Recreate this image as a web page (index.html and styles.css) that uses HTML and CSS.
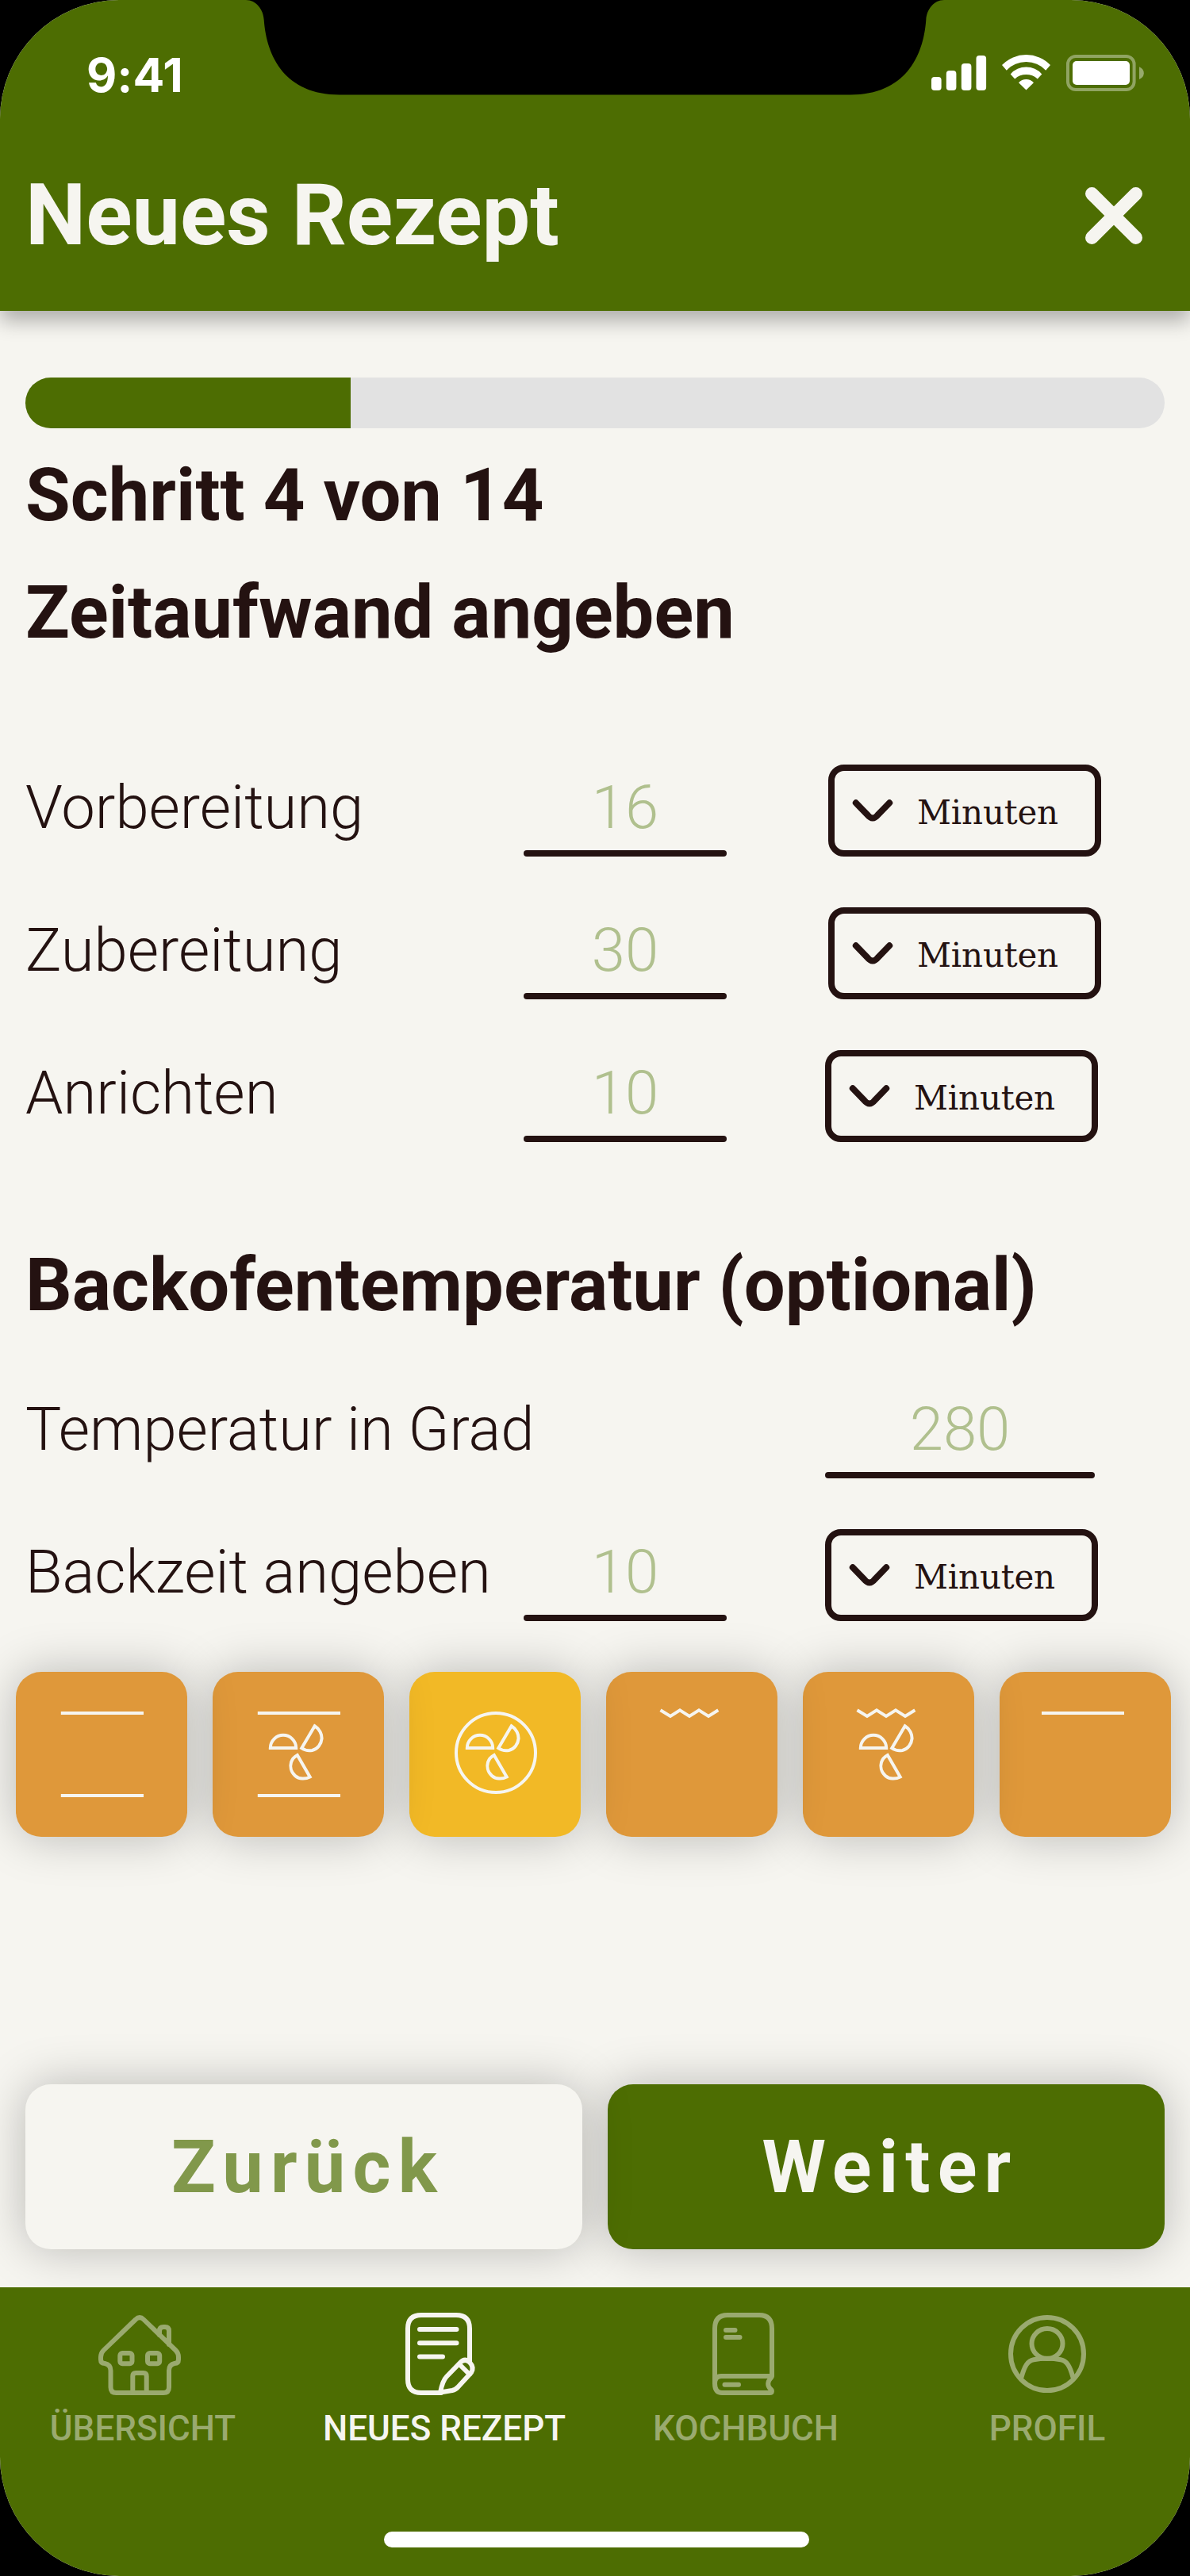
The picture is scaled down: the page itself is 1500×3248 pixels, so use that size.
FILE: index.html
```html
<!DOCTYPE html>
<html lang="de">
<head>
<meta charset="utf-8">
<title>Neues Rezept</title>
<link rel="stylesheet" href="styles.css">
</head>
<body>
<svg class="defs" width="0" height="0">
  <symbol id="chevron" viewBox="0 0 52 32">
    <path d="M4.8 6.3 19.5 21.5Q26 29.5 32.5 21.5L47.2 6.3" fill="none" stroke="currentColor" stroke-width="8" stroke-linecap="round"/>
  </symbol>
  <symbol id="fan" viewBox="0 0 216 208">
    <path d="M72.8 96A16.2 16.2 0 0 1 105.2 96ZM112.2 96.2 128.700 68.2C135 72 137.800 79 137.600 84 137 91 132.500 97.500 125.500 99 120 100 115.500 98.500 112.2 96.2ZM106.800 105 122.700 132.500C117 135.500 109 135.500 104 131 98.500 126 97.500 119 99 114 100.500 109.500 103 107 106.800 105Z"/>
  </symbol>
  <symbol id="zigzag" viewBox="0 0 216 208">
    <path d="M68.5 48.2 81 56 93 48.4 105 56 117 48.4 129 56 141.3 48.2"/>
  </symbol>
</svg>
<div class="phone">
  <header class="header">
    <div class="status">
      <span class="time">9:41</span>
      <svg class="status-icons" viewBox="1174 69 268 46" fill="#fff">
        <rect x="1174" y="97" width="12.6" height="17" rx="4"/>
        <rect x="1192.8" y="89" width="12.6" height="25" rx="4"/>
        <rect x="1211.8" y="80" width="12.6" height="34" rx="4"/>
        <rect x="1230.5" y="70" width="12.6" height="44" rx="4"/>
        <path d="M1263 82A42.5 42.5 0 0 1 1324 82L1318.2 88.7A34 34 0 0 0 1268.8 88.7Z"/>
        <path d="M1273.7 93.4A26.5 26.5 0 0 1 1313.3 93.4L1307.8 99.5A21 21 0 0 0 1279.2 99.5Z"/>
        <path d="M1284 104.3A12.5 12.5 0 0 1 1303 104.3L1293.5 113.6Z"/>
        <rect x="1346" y="71" width="83.6" height="42" rx="10" fill="none" stroke="#fff" stroke-opacity=".38" stroke-width="4"/>
        <rect x="1352" y="77" width="72" height="30" rx="5"/>
        <path d="M1436 84.3Q1441.8 87 1441.8 92.2T1436 100Z" fill-opacity=".42"/>
      </svg>
    </div>
    <div class="title-bar">
      <h1 class="title">Neues Rezept</h1>
      <svg class="close" viewBox="0 0 72 72"><path d="M8.3 8.3 63.7 63.7M63.7 8.3 8.3 63.7"/></svg>
    </div>
    <svg class="notch" viewBox="0 0 880 120"><path d="M0 0C13 0 22 12 22.7 25 26 72 50 119.5 118 119.5H762C830 119.5 854 72 857.3 25 858 12 867 0 880 0Z"/></svg>
  </header>

  <main class="main">
    <div class="progress"><div class="progress-fill" style="width:28.57%"></div></div>
    <h2 class="heading step">Schritt 4 von 14</h2>
    <h2 class="heading topic">Zeitaufwand angeben</h2>

    <div class="rows times">
      <div class="row"><span class="label">Vorbereitung</span><span class="value">16</span><span class="select"><svg><use href="#chevron"/></svg><span>Minuten</span></span></div>
      <div class="row"><span class="label">Zubereitung</span><span class="value">30</span><span class="select"><svg><use href="#chevron"/></svg><span>Minuten</span></span></div>
      <div class="row"><span class="label">Anrichten</span><span class="value">10</span><span class="select select-near"><svg><use href="#chevron"/></svg><span>Minuten</span></span></div>
    </div>

    <h2 class="heading oven">Backofentemperatur (optional)</h2>
    <div class="rows oven-rows">
      <div class="row"><span class="label label-wide">Temperatur in Grad</span><span class="value value-wide">280</span></div>
      <div class="row"><span class="label">Backzeit angeben</span><span class="value">10</span><span class="select select-near"><svg><use href="#chevron"/></svg><span>Minuten</span></span></div>
    </div>

    <div class="modes">
      <div class="mode"><svg viewBox="0 0 216 208"><path d="M56.8 52H161M56.8 156H161"/></svg></div>
      <div class="mode"><svg viewBox="0 0 216 208"><path d="M56.8 52H161M56.8 156H161"/><use href="#fan"/></svg></div>
      <div class="mode mode-active"><svg viewBox="0 0 216 208"><circle cx="109" cy="102" r="50"/><use href="#fan"/></svg></div>
      <div class="mode"><svg viewBox="0 0 216 208"><use href="#zigzag"/></svg></div>
      <div class="mode"><svg viewBox="0 0 216 208"><use href="#zigzag"/><use href="#fan"/></svg></div>
      <div class="mode"><svg viewBox="0 0 216 208"><path d="M53 52H157"/></svg></div>
    </div>

    <div class="actions">
      <div class="button back">Zurück</div>
      <div class="button next">Weiter</div>
    </div>
  </main>

  <nav class="nav">
    <div class="tab">
      <svg viewBox="120 2912 120 112">
        <path d="M171 2924.500Q176 2919.500 181 2924.500L221.500 2963.500Q225 2967 225 2972V2975Q225 2980 220 2980 213 2981.500 213 2989V3010Q213 3017 206 3017H146.500Q139.500 3017 139.500 3010V2989Q139.500 2981.500 132 2980 127 2980 127 2975V2972Q127 2967 130.500 2963.500Z"/>
        <path d="M201 2944V2939Q201 2934 206 2934H208Q213 2934 213 2939V2956"/>
        <rect x="151.300" y="2967" width="15.200" height="13.300" rx="3"/>
        <rect x="186" y="2967" width="15.200" height="13.300" rx="3"/>
        <path d="M167.300 3017V2996Q167.300 2992 171.300 2992H180.700Q184.700 2992 184.700 2996V3017"/>
      </svg>
      <span>ÜBERSICHT</span>
    </div>
    <div class="tab tab-active">
      <svg viewBox="500 2912 120 112">
        <path d="M556 3017H531Q514 3017 514 3000V2936Q514 2919 531 2919H575Q592 2919 592 2936V2977"/>
        <path d="M529 2937H575.500M529 2954.200H575.500M529 2971.500H558"/>
        <path d="M555 3016.500C557 3006 559 3000.500 563 2996.500L580.500 2978.500Q586 2973 592 2978.500 598 2985 594 2991.500L577.500 3009.500Q574.500 3013 570 3014ZM579 2981 592 2994"/>
      </svg>
      <span>NEUES REZEPT</span>
    </div>
    <div class="tab">
      <svg viewBox="880 2912 120 112">
        <path d="M901 3005V2936Q901 2919 917 2919H957Q973 2919 973 2936V2996H909Q901 2996 901 3005 901 3017 910 3017H970.500C973.500 3017 973.500 3014 971.500 3012.500 967 3008.500 967 3003 972 2998"/>
        <path d="M915 2938H926.500M915 2947H932.500M913.500 3006.700H931"/>
      </svg>
      <span>KOCHBUCH</span>
    </div>
    <div class="tab">
      <svg viewBox="1260 2912 120 112">
        <circle cx="1320" cy="2968" r="46"/>
        <ellipse cx="1320" cy="2955" rx="19.500" ry="19"/>
        <path d="M1287.500 2997.500C1291.500 2983 1295.500 2976.500 1303 2975.200Q1320 2972.500 1337 2975.200C1344.500 2976.500 1348.500 2983 1352.500 2997.500"/>
      </svg>
      <span>PROFIL</span>
    </div>
    <div class="home-indicator"></div>
  </nav>
</div>
</body>
</html>
```
FILE: styles.css
```css
* { box-sizing: border-box; }
body { margin: 0; background: #000; font-family: Roboto, "Noto Sans", sans-serif; }
h1, h2 { margin: 0; font-weight: 700; }
svg { display: block; flex: none; }
.defs { position: absolute; }

.phone {
  width: 1500px;
  height: 3248px;
  overflow: hidden;
  border-radius: 150px;
  background: #f6f5f0;
  color: #241211;
}

/* Header */
.header {
  position: relative;
  z-index: 10;
  height: 392px;
  background: #4d6d02;
  box-shadow: 0 12px 24px rgba(0, 0, 0, .3);
}
.status {
  display: flex;
  justify-content: space-between;
  align-items: flex-start;
  height: 152px;
  padding: 69px 58px 0 109px;
}
.time {
  font: 700 59px/52px Inter, "Liberation Sans", sans-serif;
  letter-spacing: .2px;
  color: #fff;
}
.status-icons { width: 268px; height: 46px; overflow: visible; }
.title-bar {
  display: flex;
  justify-content: space-between;
  align-items: center;
  height: 240px;
  padding: 0 60px 0 32px;
}
.title { font-size: 108px; line-height: 128px; color: #f6f5f0; padding-bottom: 2px; }
.close { width: 72px; height: 72px; fill: none; stroke: #f6f5f0; stroke-width: 16.6px; stroke-linecap: round; }
.notch { position: absolute; top: 0; left: 310px; width: 880px; height: 120px; }

/* Form */
.main { height: 2492px; padding: 84px 32px 0; }
.progress { height: 64px; border-radius: 32px; background: #e2e2e2; overflow: hidden; }
.progress-fill { height: 100%; background: #4d6d02; }
.heading { font-size: 92px; line-height: 108px; white-space: nowrap; letter-spacing: .05px; }
.step { margin-top: 31px; }
.topic { margin-top: 40px; }
.oven { margin-top: 127px; }
.rows { display: flex; flex-direction: column; gap: 64px; }
.times { margin-top: 137px; }
.oven-rows { margin-top: 73px; }
.row { display: flex; height: 116px; font-size: 76px; line-height: 108px; font-weight: 300; }
.label { width: 628px; flex: none; white-space: nowrap; }
.label-wide { width: 1008px; }
.value { width: 256px; text-align: center; color: #b0c08e; }
.value-wide { width: 340px; }
.value::after { content: ""; display: block; height: 8px; border-radius: 4px; background: #241211; }
.select {
  display: flex;
  align-items: center;
  gap: 30px;
  width: 344px;
  height: 116px;
  margin-left: 128px;
  padding-left: 22px;
  border: 8px solid #241211;
  border-radius: 20px;
  font: 400 42px/50px "Roboto Slab", "DejaVu Serif", serif;
  letter-spacing: -.2px;
}
.select svg { width: 52px; height: 32px; }
.select span { padding-top: 6px; }
.select-near { margin-left: 124px; }

/* Oven modes: each tile casts its shadow on the one to its right */
.modes { display: flex; gap: 32px; margin: 64px -12px 0; }
.mode {
  position: relative;
  width: 216px;
  height: 208px;
  flex: none;
  border-radius: 32px;
  background: #df983a;
  box-shadow: 0 0 60px rgba(0, 0, 0, .25);
}
.mode:nth-child(1) { z-index: 6; }
.mode:nth-child(2) { z-index: 5; }
.mode:nth-child(3) { z-index: 4; }
.mode:nth-child(4) { z-index: 3; }
.mode:nth-child(5) { z-index: 2; }
.mode:nth-child(6) { z-index: 1; }
.mode-active { background: #f2b926; }
.mode svg { width: 216px; height: 208px; fill: none; stroke: #f6f5f0; stroke-width: 4px; }

.actions { display: flex; gap: 32px; margin-top: 312px; }
.button {
  flex: 1;
  height: 208px;
  padding-left: 10px;
  border-radius: 32px;
  text-align: center;
  font-size: 92px;
  font-weight: 700;
  line-height: 209px;
  letter-spacing: 9.2px;
  box-shadow: 0 0 60px rgba(0, 0, 0, .25);
}
.back { position: relative; background: #f6f5f0; color: #81984b; }
.next { background: #4d6d02; color: #f6f5f0; }

/* Tab bar */
.nav {
  position: relative;
  z-index: 10;
  display: flex;
  gap: 24px;
  height: 364px;
  padding: 28px 2px 0;
  background: #4d6d02;
}
.tab {
  display: flex;
  flex-direction: column;
  align-items: center;
  width: 356px;
  gap: 12px;
  font-size: 44px;
  line-height: 52px;
  font-weight: 500;
  color: #9aaa6f;
}
.tab svg { width: 120px; height: 112px; fill: none; stroke: currentColor; stroke-width: 6px; stroke-linecap: round; stroke-linejoin: round; }
.tab-active { color: #f6f5f0; }
.home-indicator {
  position: absolute;
  left: 484px;
  bottom: 36px;
  width: 536px;
  height: 20px;
  border-radius: 10px;
  background: #fff;
}
```
